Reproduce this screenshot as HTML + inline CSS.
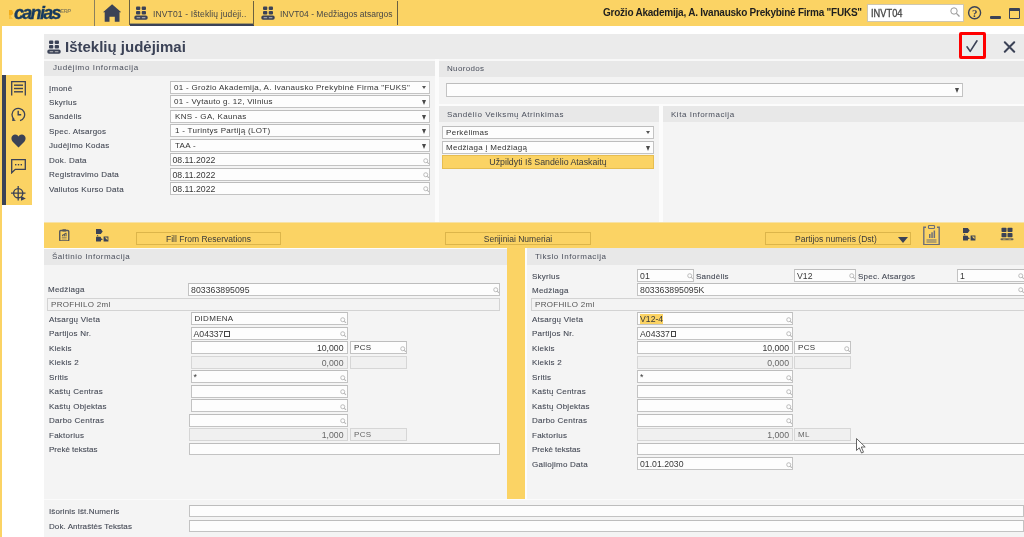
<!DOCTYPE html><html><head><meta charset='utf-8'><style>
*{margin:0;padding:0;-webkit-font-smoothing:antialiased}
body{will-change:transform}
html,body{width:1024px;height:537px;overflow:hidden;background:#fff;position:relative}
body div, body svg{position:absolute}
body div div{position:absolute}
.lbl{font:8px/10px 'Liberation Sans',sans-serif;color:#444955;white-space:nowrap;letter-spacing:0.25px;margin-top:1.5px;-webkit-text-stroke:0.1px #444955}
.sec{font:8px/10px 'Liberation Sans',sans-serif;color:#4a4f5c;white-space:nowrap;letter-spacing:0.53px}
.iv{font:8px/10px 'Liberation Sans',sans-serif;color:#333;white-space:nowrap;letter-spacing:0.3px}
.ivn{font:8.7px/10px 'Liberation Sans',sans-serif;color:#383838;white-space:nowrap;letter-spacing:0.05px}
.tab{font:8.5px/10px 'Liberation Sans',sans-serif;color:#474747;white-space:nowrap;letter-spacing:0.14px;}
.comp{font:bold 10px/12px 'Liberation Sans',sans-serif;color:#1e1e1e;white-space:nowrap;letter-spacing:-0.23px}
.sbx{font:10.5px/12px 'Liberation Sans',sans-serif;color:#444;white-space:nowrap;letter-spacing:0px;transform:scaleX(0.885);transform-origin:0 0;-webkit-text-stroke:0.3px #444}
.title{font:bold 15px/18px 'Liberation Sans',sans-serif;color:#3b4256;white-space:nowrap}
.btn{font:8.5px/10px 'Liberation Sans',sans-serif;color:#3a3a3a;white-space:nowrap}
.ivd{font:8.7px/10px 'Liberation Sans',sans-serif;color:#383838;white-space:nowrap;letter-spacing:0px}
.sq{display:inline-block;width:3.5px;height:4px;border:1px solid #444;margin-left:1px;vertical-align:0px}
.in{box-sizing:border-box;border:1px solid #c3c3c3;border-top-color:#bdbdbd}
.srch{position:absolute;left:0;top:0}
</style></head><body>
<div style="left:0px;top:0px;width:1024px;height:26px;background:#fbd364"></div>
<div style="left:0px;top:0px;width:2px;height:537px;background:#fbd364"></div>
<div style="left:8.5px;top:9.5px;width:4.5px;height:9.5px;background:linear-gradient(#f3ad1a 0,#f3ad1a 50%,#f7c03a 50%);clip-path:polygon(0 0,70% 0,100% 25%,100% 45%,50% 72%,100% 100%,0 100%)"></div>
<div style="left:14px;top:2.5px;font:italic bold 18px/20px 'Liberation Sans',sans-serif;color:#163a5e;letter-spacing:-1.7px;-webkit-text-stroke:0.35px #163a5e">canias</div>
<div style="left:60px;top:7.5px;font:italic bold 5.5px/6px 'Liberation Sans',sans-serif;color:#8f8258;letter-spacing:-0.2px">ERP</div>
<div style="left:93.5px;top:0px;width:1.5px;height:26px;background:#8a7f5e"></div>
<svg style="position:absolute;left:102.5px;top:4px" width="18.5" height="18" viewBox="0 0 18.5 18"><path d="M9.1 0.2 L18.2 8.3 L16.5 8.3 L16.5 17.8 L11.8 17.8 L11.8 12.8 L6.5 12.8 L6.5 17.8 L1.7 17.8 L1.7 8.3 L0 8.3 Z" fill="#3b4256"/></svg>
<div style="left:129px;top:0px;width:1.2px;height:25px;background:#6b6040"></div>
<div style="left:130px;top:24px;width:124px;height:2px;background:#3b4256"></div>
<div style="left:130px;top:23px;width:124px;height:1px;background:#a89860"></div>
<div style="left:253px;top:1px;width:1px;height:24px;background:#6b6040"></div>
<div style="left:397px;top:1px;width:1px;height:24px;background:#6b6040"></div>
<svg style="position:absolute;left:134px;top:6px" width="14.0" height="14.0" viewBox="0 0 14 14"><rect x="2" y="0.5" width="4.3" height="3.6" rx="1" fill="#3b4256"/><rect x="7.7" y="0.5" width="4.3" height="3.6" rx="1" fill="#3b4256"/><rect x="2" y="5" width="4.3" height="3.6" rx="1" fill="#3b4256"/><rect x="7.7" y="5" width="4.3" height="3.6" rx="1" fill="#3b4256"/><rect x="0.3" y="9.6" width="13.4" height="4.2" rx="1.8" fill="#3b4256"/><rect x="2.6" y="11.3" width="3.6" height="0.9" fill="#c8c8c8"/><rect x="7.8" y="11.3" width="3.6" height="0.9" fill="#c8c8c8"/></svg>
<div class="tab" style="left:153px;top:9px;">INVT01 - Išteklių judėji..</div>
<svg style="position:absolute;left:261px;top:6px" width="14.0" height="14.0" viewBox="0 0 14 14"><rect x="2" y="0.5" width="4.3" height="3.6" rx="1" fill="#3b4256"/><rect x="7.7" y="0.5" width="4.3" height="3.6" rx="1" fill="#3b4256"/><rect x="2" y="5" width="4.3" height="3.6" rx="1" fill="#3b4256"/><rect x="7.7" y="5" width="4.3" height="3.6" rx="1" fill="#3b4256"/><rect x="0.3" y="9.6" width="13.4" height="4.2" rx="1.8" fill="#3b4256"/><rect x="2.6" y="11.3" width="3.6" height="0.9" fill="#c8c8c8"/><rect x="7.8" y="11.3" width="3.6" height="0.9" fill="#c8c8c8"/></svg>
<div class="tab" style="left:280px;top:9px;letter-spacing:0px">INVT04 - Medžiagos atsargos</div>
<div class="comp" style="left:603px;top:7px;">Grožio Akademija, A. Ivanausko Prekybinė Firma "FUKS"</div>
<div style="left:867px;top:4px;width:96.5px;height:17.5px;background:#fff;border:1px solid #cfc7b0;box-sizing:border-box"></div>
<div class="sbx" style="left:871px;top:7.2px;">INVT04</div>
<svg style="position:absolute;left:950px;top:7px" width="10" height="10" viewBox="0 0 10 10"><circle cx="4" cy="4" r="3.2" fill="none" stroke="#9a9a9a" stroke-width="1"/><path d="M6.4 6.4 9.5 9.5" stroke="#9a9a9a" stroke-width="1.3"/></svg>
<svg style="position:absolute;left:967px;top:5px" width="15" height="15" viewBox="0 0 15 15"><circle cx="7.6" cy="7.7" r="6" fill="none" stroke="#3b4256" stroke-width="1.4"/><text x="7.7" y="11.6" text-anchor="middle" font-family="Liberation Serif" font-weight="bold" font-size="11" fill="#3b4256">?</text></svg>
<div style="left:989.5px;top:16px;width:11px;height:2.5px;background:#3b4256;border-radius:1px"></div>
<div style="left:1009px;top:8px;width:11px;height:11px;border:1.6px solid #3b4256;border-top-width:3.6px;box-sizing:border-box;border-radius:1px"></div>
<div style="left:44px;top:34px;width:980px;height:503px;background:#f4f4f4"></div>
<div style="left:44px;top:34px;width:980px;height:25px;background:#ebebeb"></div>
<div style="left:44px;top:59px;width:980px;height:1.5px;background:#f8f8f8"></div>
<svg style="position:absolute;left:47px;top:40px" width="14.0" height="14.0" viewBox="0 0 14 14"><rect x="2" y="0.5" width="4.3" height="3.6" rx="1" fill="#3b4256"/><rect x="7.7" y="0.5" width="4.3" height="3.6" rx="1" fill="#3b4256"/><rect x="2" y="5" width="4.3" height="3.6" rx="1" fill="#3b4256"/><rect x="7.7" y="5" width="4.3" height="3.6" rx="1" fill="#3b4256"/><rect x="0.3" y="9.6" width="13.4" height="4.2" rx="1.8" fill="#3b4256"/><rect x="2.6" y="11.3" width="3.6" height="0.9" fill="#c8c8c8"/><rect x="7.8" y="11.3" width="3.6" height="0.9" fill="#c8c8c8"/></svg>
<div class="title" style="left:65px;top:37.7px;">Išteklių judėjimai</div>
<div style="left:959px;top:32px;width:27px;height:27px;border:3px solid #f00;border-radius:2px;box-sizing:border-box;background:#e9ecec"></div>
<svg style="position:absolute;left:965px;top:39px" width="14" height="14" viewBox="0 0 14 14"><path d="M2 7.8 L5.2 12.4 L12 1.8" fill="none" stroke="#3b4256" stroke-width="1.6" stroke-linecap="round" stroke-linejoin="round"/></svg>
<svg style="position:absolute;left:1003px;top:40px" width="13" height="13" viewBox="0 0 13 13"><path d="M1.8 2.3 L11.2 11.7 M11.2 2.3 L1.8 11.7" fill="none" stroke="#3b4256" stroke-width="2" stroke-linecap="round"/></svg>
<div style="left:44px;top:61px;width:391px;height:15px;background:#e8e8e8"></div>
<div class="sec" style="left:53px;top:63px;letter-spacing:0.62px">Judėjimo Informacija</div>
<div style="left:435px;top:59px;width:4px;height:163px;background:#fcfcfc"></div>
<div class="lbl" style="left:49px;top:82.0px;">Įmonė</div>
<div class="in" style="left:170px;top:81.0px;width:260px;height:13px;background:#fdfdfd;"><div class="iv" style="left:3px;top:1px">01 - Grožio Akademija, A. Ivanausko Prekybinė Firma "FUKS"</div><div class="arr" style="right:3.5px;top:4px;border-left:2px solid transparent;border-right:2px solid transparent;border-top:3.5px solid #555"></div></div>
<div class="lbl" style="left:49px;top:96.45px;">Skyrius</div>
<div class="in" style="left:170px;top:95.45px;width:260px;height:13px;background:#fdfdfd;"><div class="iv" style="left:3px;top:1px">01 - Vytauto g. 12, Vilnius</div><div class="arr" style="right:3px;top:4px;border-left:2.5px solid transparent;border-right:2.5px solid transparent;border-top:5px solid #4a4a4a"></div></div>
<div class="lbl" style="left:49px;top:110.9px;">Sandėlis</div>
<div class="in" style="left:170px;top:109.9px;width:260px;height:13px;background:#fdfdfd;"><div class="iv" style="left:3px;top:1px"><span style="margin-left:1px">KNS - GA, Kaunas</span></div><div class="arr" style="right:3px;top:4px;border-left:2.5px solid transparent;border-right:2.5px solid transparent;border-top:5px solid #4a4a4a"></div></div>
<div class="lbl" style="left:49px;top:125.35px;">Spec. Atsargos</div>
<div class="in" style="left:170px;top:124.35px;width:260px;height:13px;background:#fdfdfd;"><div class="iv" style="left:3px;top:1px"><span style="margin-left:1px">1 - Turintys Partiją (LOT)</span></div><div class="arr" style="right:3px;top:4px;border-left:2.5px solid transparent;border-right:2.5px solid transparent;border-top:5px solid #4a4a4a"></div></div>
<div class="lbl" style="left:49px;top:139.8px;">Judėjimo Kodas</div>
<div class="in" style="left:170px;top:138.8px;width:260px;height:13px;background:#fdfdfd;"><div class="iv" style="left:3px;top:1px"><span style="margin-left:1px">TAA -</span></div><div class="arr" style="right:3px;top:4px;border-left:2.5px solid transparent;border-right:2.5px solid transparent;border-top:5px solid #4a4a4a"></div></div>
<div class="lbl" style="left:49px;top:154.25px;">Dok. Data</div>
<div class="in" style="left:169.5px;top:153.25px;width:260.5px;height:13px;background:#fdfdfd;"><div class="ivd" style="left:2px;top:1px">08.11.2022</div><div style="right:0px;top:3.3px;width:6.5px;height:6.5px"><svg class="srch" width="6.5" height="6.5" viewBox="0 0 10 10"><circle cx="4.2" cy="4.2" r="3.1" fill="none" stroke="#bababa" stroke-width="1.5"/><path d="M6.4 6.4 9.2 9.2" stroke="#bababa" stroke-width="1.7"/></svg></div></div>
<div class="lbl" style="left:49px;top:168.7px;">Registravimo Data</div>
<div class="in" style="left:169.5px;top:167.7px;width:260.5px;height:13px;background:#fdfdfd;"><div class="ivd" style="left:2px;top:1px">08.11.2022</div><div style="right:0px;top:3.3px;width:6.5px;height:6.5px"><svg class="srch" width="6.5" height="6.5" viewBox="0 0 10 10"><circle cx="4.2" cy="4.2" r="3.1" fill="none" stroke="#bababa" stroke-width="1.5"/><path d="M6.4 6.4 9.2 9.2" stroke="#bababa" stroke-width="1.7"/></svg></div></div>
<div class="lbl" style="left:49px;top:183.14999999999998px;">Valiutos Kurso Data</div>
<div class="in" style="left:169.5px;top:182.14999999999998px;width:260.5px;height:13px;background:#fdfdfd;"><div class="ivd" style="left:2px;top:1px">08.11.2022</div><div style="right:0px;top:3.3px;width:6.5px;height:6.5px"><svg class="srch" width="6.5" height="6.5" viewBox="0 0 10 10"><circle cx="4.2" cy="4.2" r="3.1" fill="none" stroke="#bababa" stroke-width="1.5"/><path d="M6.4 6.4 9.2 9.2" stroke="#bababa" stroke-width="1.7"/></svg></div></div>
<div style="left:439px;top:61px;width:585px;height:16px;background:#e8e8e8"></div>
<div class="sec" style="left:447px;top:64px;letter-spacing:0.33px">Nuorodos</div>
<div class="in" style="left:446px;top:83px;width:517px;height:14px;background:#fdfdfd;"><div class="arr" style="right:3px;top:4px;border-left:2.5px solid transparent;border-right:2.5px solid transparent;border-top:5px solid #4a4a4a"></div></div>
<div style="left:439px;top:104px;width:585px;height:2px;background:#fcfcfc"></div>
<div style="left:439px;top:106px;width:220px;height:16px;background:#e8e8e8"></div>
<div class="sec" style="left:447px;top:110px;">Sandėlio Veiksmų Atrinkimas</div>
<div style="left:659px;top:106px;width:4px;height:116px;background:#fcfcfc"></div>
<div style="left:663px;top:106px;width:361px;height:16px;background:#e8e8e8"></div>
<div class="sec" style="left:671px;top:110px;">Kita Informacija</div>
<div class="in" style="left:442px;top:126px;width:212px;height:13px;background:#fdfdfd;"><div class="iv" style="left:3px;top:1px">Perkėlimas</div><div class="arr" style="right:3.5px;top:4px;border-left:2px solid transparent;border-right:2px solid transparent;border-top:3.5px solid #555"></div></div>
<div class="in" style="left:442px;top:141px;width:212px;height:12.5px;background:#fdfdfd;"><div class="iv" style="left:3px;top:1px">Medžiaga į Medžiagą</div><div class="arr" style="right:3px;top:4px;border-left:2.5px solid transparent;border-right:2.5px solid transparent;border-top:5px solid #4a4a4a"></div></div>
<div style="left:442px;top:155px;width:212px;height:13.5px;background:#fbd364;border:1px solid #e6bd50;box-sizing:border-box"></div>
<div class="btn" style="left:442px;top:156.5px;width:212px;text-align:center;font-size:8.8px">Užpildyti Iš Sandėlio Ataskaitų</div>
<div style="left:44px;top:222px;width:980px;height:1px;background:#f7e2a6"></div>
<div style="left:44px;top:223px;width:980px;height:25px;background:#fbd364"></div>
<svg style="position:absolute;left:59px;top:228.5px" width="10.5" height="12.6" viewBox="0 0 10 12"><rect x="0.7" y="1.4" width="8.6" height="9.9" rx="0.9" fill="none" stroke="#55565a" stroke-width="1.3"/><rect x="3.2" y="0.2" width="3.6" height="2.2" rx="0.6" fill="#55565a"/><path d="M3 6.3 L6.8 3.8" stroke="#55565a" stroke-width="0.9"/><rect x="3" y="5.4" width="1" height="1.6" fill="#55565a"/><rect x="4.6" y="4.6" width="1" height="2.4" fill="#55565a"/><rect x="6.2" y="3.8" width="1" height="3.2" fill="#55565a"/><rect x="2.7" y="7.9" width="4.6" height="0.7" fill="#55565a" opacity="0.7"/><rect x="2.7" y="9.2" width="4.6" height="0.7" fill="#55565a" opacity="0.7"/></svg>
<svg style="position:absolute;left:96px;top:229px" width="13.0" height="13.0" viewBox="0 0 13 13"><path d="M0 0 H4.8 L6.7 2.5 L4.8 5 H0 Z" fill="#3b4256"/><path d="M1.6 5.8 L2.6 7.2 H0.6 Z" fill="#3b4256"/><rect x="0" y="7.8" width="5" height="4.8" rx="0.6" fill="#3b4256"/><path d="M5 9.2 L7 10.2 L5 11.2 Z" fill="#3b4256"/><path d="M7.6 7.6 H12.4 V12.6 H7.6 Z M8.8 8.4 L11.5 11.3 V8.4 Z" fill="#3b4256" fill-rule="evenodd"/></svg>
<div style="left:136px;top:232px;width:145px;height:13px;border:1px solid #dcb54a;box-sizing:border-box"></div>
<div class="btn" style="left:136px;top:234px;width:145px;text-align:center">Fill From Reservations</div>
<div style="left:445px;top:232px;width:146px;height:13px;border:1px solid #dcb54a;box-sizing:border-box"></div>
<div class="btn" style="left:445px;top:234px;width:146px;text-align:center">Serijiniai Numeriai</div>
<div style="left:765px;top:232px;width:146px;height:13px;border:1px solid #dcb54a;box-sizing:border-box"></div>
<div class="btn" style="left:795px;top:234px;">Partijos numeris (Dst)</div>
<div style="left:898px;top:236.5px;width:0;height:0;border-left:5.5px solid transparent;border-right:5.5px solid transparent;border-top:6px solid #3b4256"></div>
<svg style="position:absolute;left:923px;top:224.5px" width="17" height="20.5" viewBox="0 0 17 20.5"><path d="M3 2.3 H0.8 V19.7 H16.2 V2.3 H14" fill="none" stroke="#6a6e7a" stroke-width="1.4"/><rect x="5.5" y="0.5" width="6" height="3" rx="0.8" fill="none" stroke="#6a6e7a" stroke-width="1.1"/><rect x="6" y="9" width="1.5" height="4" fill="#6a6e7a"/><rect x="8.3" y="7.3" width="1.5" height="5.7" fill="#6a6e7a"/><rect x="10.6" y="5.5" width="1.5" height="7.5" fill="#6a6e7a"/><rect x="3.5" y="14.5" width="10" height="1" fill="#6a6e7a"/><rect x="3.5" y="16.5" width="10" height="1" fill="#6a6e7a"/></svg>
<svg style="position:absolute;left:963px;top:228px" width="13.0" height="13.0" viewBox="0 0 13 13"><path d="M0 0 H4.8 L6.7 2.5 L4.8 5 H0 Z" fill="#3b4256"/><path d="M1.6 5.8 L2.6 7.2 H0.6 Z" fill="#3b4256"/><rect x="0" y="7.8" width="5" height="4.8" rx="0.6" fill="#3b4256"/><path d="M5 9.2 L7 10.2 L5 11.2 Z" fill="#3b4256"/><path d="M7.6 7.6 H12.4 V12.6 H7.6 Z M8.8 8.4 L11.5 11.3 V8.4 Z" fill="#3b4256" fill-rule="evenodd"/></svg>
<svg style="position:absolute;left:1000px;top:227px" width="14" height="14" viewBox="0 0 14 14"><rect x="1.5" y="0.8" width="5" height="4.3" rx="0.8" fill="#3b4256"/><rect x="7.5" y="0.8" width="5" height="4.3" rx="0.8" fill="#3b4256"/><rect x="1.5" y="6" width="5" height="4.3" rx="0.8" fill="#3b4256"/><rect x="7.5" y="6" width="5" height="4.3" rx="0.8" fill="#3b4256"/><rect x="0.5" y="11.2" width="13" height="2" rx="1" fill="#3b4256" opacity="0.75"/><rect x="3" y="11.8" width="2.5" height="0.8" fill="#f9d262" opacity="0.6"/><rect x="8.5" y="11.8" width="2.5" height="0.8" fill="#f9d262" opacity="0.6"/></svg>
<div style="left:44px;top:248px;width:463px;height:17px;background:#e8e8e8"></div>
<div style="left:44px;top:247.5px;width:980px;height:1px;background:#fcfcfc"></div>
<div style="left:507px;top:247px;width:18px;height:253px;background:#fbd364"></div>
<div class="sec" style="left:52px;top:252px;">Šaltinio Informacija</div>
<div style="left:507px;top:247px;width:18px;height:253px;background:#fbd364"></div>
<div style="left:525px;top:248px;width:2px;height:252px;background:#fcfcfc"></div>
<div style="left:527px;top:248px;width:497px;height:17px;background:#e8e8e8"></div>
<div class="sec" style="left:535px;top:252px;">Tikslo Informacija</div>
<div style="left:44px;top:499px;width:980px;height:1px;background:#fbfbfb"></div>
<div class="lbl" style="left:48px;top:283.5px;">Medžiaga</div>
<div class="in" style="left:188px;top:283px;width:312px;height:13px;background:#fdfdfd;"><div class="ivn" style="left:2px;top:1px">803363895095</div><div style="right:0px;top:3.3px;width:6.5px;height:6.5px"><svg class="srch" width="6.5" height="6.5" viewBox="0 0 10 10"><circle cx="4.2" cy="4.2" r="3.1" fill="none" stroke="#bababa" stroke-width="1.5"/><path d="M6.4 6.4 9.2 9.2" stroke="#bababa" stroke-width="1.7"/></svg></div></div>
<div class="in" style="left:47px;top:297.5px;width:453px;height:13px;background:#f3f3f3;border-color:#d3d3d3"><div class="iv" style="left:3px;top:1px;color:#555">PROFHILO 2ml</div></div>
<div class="lbl" style="left:49px;top:313.3px;">Atsargų Vieta</div>
<div class="in" style="left:190.5px;top:312.3px;width:157px;height:13px;background:#fdfdfd;"><div class="iv" style="left:3px;top:1px">DIDMENA</div><div style="right:0px;top:3.3px;width:6.5px;height:6.5px"><svg class="srch" width="6.5" height="6.5" viewBox="0 0 10 10"><circle cx="4.2" cy="4.2" r="3.1" fill="none" stroke="#bababa" stroke-width="1.5"/><path d="M6.4 6.4 9.2 9.2" stroke="#bababa" stroke-width="1.7"/></svg></div></div>
<div class="lbl" style="left:49px;top:327.8px;">Partijos Nr.</div>
<div class="in" style="left:190.5px;top:326.8px;width:157px;height:13px;background:#fdfdfd;"><div class="ivd" style="left:2px;top:1px">A04337<span class='sq'></span></div><div style="right:0px;top:3.3px;width:6.5px;height:6.5px"><svg class="srch" width="6.5" height="6.5" viewBox="0 0 10 10"><circle cx="4.2" cy="4.2" r="3.1" fill="none" stroke="#bababa" stroke-width="1.5"/><path d="M6.4 6.4 9.2 9.2" stroke="#bababa" stroke-width="1.7"/></svg></div></div>
<div class="lbl" style="left:49px;top:342.3px;">Kiekis</div>
<div class="in" style="left:190.5px;top:341.3px;width:157px;height:13px;background:#fdfdfd;"><div class="ivd" style="right:3px;top:1px;text-align:right">10,000</div></div>
<div class="in" style="left:350px;top:341.3px;width:57px;height:13px;background:#fdfdfd;"><div class="iv" style="left:3px;top:1px">PCS</div><div style="right:0px;top:3.3px;width:6.5px;height:6.5px"><svg class="srch" width="6.5" height="6.5" viewBox="0 0 10 10"><circle cx="4.2" cy="4.2" r="3.1" fill="none" stroke="#bababa" stroke-width="1.5"/><path d="M6.4 6.4 9.2 9.2" stroke="#bababa" stroke-width="1.7"/></svg></div></div>
<div class="lbl" style="left:49px;top:356.8px;">Kiekis 2</div>
<div class="in" style="left:190.5px;top:355.8px;width:157px;height:13px;background:#f0f0f0;border-color:#d6d6d6;"><div class="ivd" style="right:3px;top:1px;text-align:right"><span style="color:#666">0,000</span></div></div>
<div class="in" style="left:350px;top:355.8px;width:57px;height:13px;background:#f0f0f0;border-color:#d6d6d6;"></div>
<div class="lbl" style="left:49px;top:371.3px;">Sritis</div>
<div class="in" style="left:190.5px;top:370.3px;width:157px;height:13px;background:#fdfdfd;"><div class="ivn" style="left:2px;top:1px">*</div><div style="right:0px;top:3.3px;width:6.5px;height:6.5px"><svg class="srch" width="6.5" height="6.5" viewBox="0 0 10 10"><circle cx="4.2" cy="4.2" r="3.1" fill="none" stroke="#bababa" stroke-width="1.5"/><path d="M6.4 6.4 9.2 9.2" stroke="#bababa" stroke-width="1.7"/></svg></div></div>
<div class="lbl" style="left:49px;top:385.8px;">Kaštų Centras</div>
<div class="in" style="left:190.5px;top:384.8px;width:157px;height:13px;background:#fdfdfd;"><div style="right:0px;top:3.3px;width:6.5px;height:6.5px"><svg class="srch" width="6.5" height="6.5" viewBox="0 0 10 10"><circle cx="4.2" cy="4.2" r="3.1" fill="none" stroke="#bababa" stroke-width="1.5"/><path d="M6.4 6.4 9.2 9.2" stroke="#bababa" stroke-width="1.7"/></svg></div></div>
<div class="lbl" style="left:49px;top:400.3px;">Kaštų Objektas</div>
<div class="in" style="left:190.5px;top:399.3px;width:157px;height:13px;background:#fdfdfd;"><div style="right:0px;top:3.3px;width:6.5px;height:6.5px"><svg class="srch" width="6.5" height="6.5" viewBox="0 0 10 10"><circle cx="4.2" cy="4.2" r="3.1" fill="none" stroke="#bababa" stroke-width="1.5"/><path d="M6.4 6.4 9.2 9.2" stroke="#bababa" stroke-width="1.7"/></svg></div></div>
<div class="lbl" style="left:49px;top:414.8px;">Darbo Centras</div>
<div class="in" style="left:189px;top:413.8px;width:158.5px;height:13px;background:#fdfdfd;"><div style="right:0px;top:3.3px;width:6.5px;height:6.5px"><svg class="srch" width="6.5" height="6.5" viewBox="0 0 10 10"><circle cx="4.2" cy="4.2" r="3.1" fill="none" stroke="#bababa" stroke-width="1.5"/><path d="M6.4 6.4 9.2 9.2" stroke="#bababa" stroke-width="1.7"/></svg></div></div>
<div class="lbl" style="left:49px;top:429.3px;">Faktorius</div>
<div class="in" style="left:189px;top:428.3px;width:158.5px;height:13px;background:#f0f0f0;border-color:#d6d6d6;"><div class="ivd" style="right:3px;top:1px;text-align:right"><span style="color:#666">1,000</span></div></div>
<div class="in" style="left:350px;top:428.3px;width:57px;height:13px;background:#f0f0f0;border-color:#d6d6d6;"><div class="iv" style="left:3px;top:1px"><span style="color:#666">PCS</span></div></div>
<div class="lbl" style="left:49px;top:443.8px;letter-spacing:0px">Prekė tekstas</div>
<div class="in" style="left:189px;top:442.8px;width:311px;height:12px;background:#fdfdfd;"></div>
<div class="lbl" style="left:532px;top:270px;">Skyrius</div>
<div class="in" style="left:637px;top:269px;width:57px;height:13px;background:#fdfdfd;"><div class="ivn" style="left:2px;top:1px">01</div><div style="right:0px;top:3.3px;width:6.5px;height:6.5px"><svg class="srch" width="6.5" height="6.5" viewBox="0 0 10 10"><circle cx="4.2" cy="4.2" r="3.1" fill="none" stroke="#bababa" stroke-width="1.5"/><path d="M6.4 6.4 9.2 9.2" stroke="#bababa" stroke-width="1.7"/></svg></div></div>
<div class="lbl" style="left:696px;top:270px;">Sandėlis</div>
<div class="in" style="left:794px;top:269px;width:62px;height:13px;background:#fdfdfd;"><div class="ivn" style="left:2px;top:1px">V12</div><div style="right:0px;top:3.3px;width:6.5px;height:6.5px"><svg class="srch" width="6.5" height="6.5" viewBox="0 0 10 10"><circle cx="4.2" cy="4.2" r="3.1" fill="none" stroke="#bababa" stroke-width="1.5"/><path d="M6.4 6.4 9.2 9.2" stroke="#bababa" stroke-width="1.7"/></svg></div></div>
<div class="lbl" style="left:858px;top:270px;">Spec. Atsargos</div>
<div class="in" style="left:957px;top:269px;width:68px;height:13px;background:#fdfdfd;"><div class="ivn" style="left:2px;top:1px">1</div><div style="right:0px;top:3.3px;width:6.5px;height:6.5px"><svg class="srch" width="6.5" height="6.5" viewBox="0 0 10 10"><circle cx="4.2" cy="4.2" r="3.1" fill="none" stroke="#bababa" stroke-width="1.5"/><path d="M6.4 6.4 9.2 9.2" stroke="#bababa" stroke-width="1.7"/></svg></div></div>
<div class="lbl" style="left:532px;top:284px;">Medžiaga</div>
<div class="in" style="left:637px;top:283px;width:388px;height:13px;background:#fdfdfd;"><div class="ivn" style="left:2px;top:1px">803363895095K</div><div style="right:0px;top:3.3px;width:6.5px;height:6.5px"><svg class="srch" width="6.5" height="6.5" viewBox="0 0 10 10"><circle cx="4.2" cy="4.2" r="3.1" fill="none" stroke="#bababa" stroke-width="1.5"/><path d="M6.4 6.4 9.2 9.2" stroke="#bababa" stroke-width="1.7"/></svg></div></div>
<div class="in" style="left:531px;top:297.5px;width:500px;height:13px;background:#f3f3f3;border-color:#d3d3d3"><div class="iv" style="left:3px;top:1px;color:#555">PROFHILO 2ml</div></div>
<div class="lbl" style="left:532px;top:313.3px;">Atsargų Vieta</div>
<div class="in" style="left:637px;top:312.3px;width:156px;height:13px;background:#fdfdfd;"><div class="ivd" style="left:2px;top:1px"><span style="background:#fbd364">V12-4</span></div><div style="right:0px;top:3.3px;width:6.5px;height:6.5px"><svg class="srch" width="6.5" height="6.5" viewBox="0 0 10 10"><circle cx="4.2" cy="4.2" r="3.1" fill="none" stroke="#bababa" stroke-width="1.5"/><path d="M6.4 6.4 9.2 9.2" stroke="#bababa" stroke-width="1.7"/></svg></div></div>
<div class="lbl" style="left:532px;top:327.8px;">Partijos Nr.</div>
<div class="in" style="left:637px;top:326.8px;width:156px;height:13px;background:#fdfdfd;"><div class="ivd" style="left:2px;top:1px">A04337<span class='sq'></span></div><div style="right:0px;top:3.3px;width:6.5px;height:6.5px"><svg class="srch" width="6.5" height="6.5" viewBox="0 0 10 10"><circle cx="4.2" cy="4.2" r="3.1" fill="none" stroke="#bababa" stroke-width="1.5"/><path d="M6.4 6.4 9.2 9.2" stroke="#bababa" stroke-width="1.7"/></svg></div></div>
<div class="lbl" style="left:532px;top:342.3px;">Kiekis</div>
<div class="in" style="left:637px;top:341.3px;width:156px;height:13px;background:#fdfdfd;"><div class="ivd" style="right:3px;top:1px;text-align:right">10,000</div></div>
<div class="in" style="left:794px;top:341.3px;width:57px;height:13px;background:#fdfdfd;"><div class="iv" style="left:3px;top:1px">PCS</div><div style="right:0px;top:3.3px;width:6.5px;height:6.5px"><svg class="srch" width="6.5" height="6.5" viewBox="0 0 10 10"><circle cx="4.2" cy="4.2" r="3.1" fill="none" stroke="#bababa" stroke-width="1.5"/><path d="M6.4 6.4 9.2 9.2" stroke="#bababa" stroke-width="1.7"/></svg></div></div>
<div class="lbl" style="left:532px;top:356.8px;">Kiekis 2</div>
<div class="in" style="left:637px;top:355.8px;width:156px;height:13px;background:#f0f0f0;border-color:#d6d6d6;"><div class="ivd" style="right:3px;top:1px;text-align:right"><span style="color:#666">0,000</span></div></div>
<div class="in" style="left:794px;top:355.8px;width:57px;height:13px;background:#f0f0f0;border-color:#d6d6d6;"></div>
<div class="lbl" style="left:532px;top:371.3px;">Sritis</div>
<div class="in" style="left:637px;top:370.3px;width:156px;height:13px;background:#fdfdfd;"><div class="ivn" style="left:2px;top:1px">*</div><div style="right:0px;top:3.3px;width:6.5px;height:6.5px"><svg class="srch" width="6.5" height="6.5" viewBox="0 0 10 10"><circle cx="4.2" cy="4.2" r="3.1" fill="none" stroke="#bababa" stroke-width="1.5"/><path d="M6.4 6.4 9.2 9.2" stroke="#bababa" stroke-width="1.7"/></svg></div></div>
<div class="lbl" style="left:532px;top:385.8px;">Kaštų Centras</div>
<div class="in" style="left:637px;top:384.8px;width:156px;height:13px;background:#fdfdfd;"><div style="right:0px;top:3.3px;width:6.5px;height:6.5px"><svg class="srch" width="6.5" height="6.5" viewBox="0 0 10 10"><circle cx="4.2" cy="4.2" r="3.1" fill="none" stroke="#bababa" stroke-width="1.5"/><path d="M6.4 6.4 9.2 9.2" stroke="#bababa" stroke-width="1.7"/></svg></div></div>
<div class="lbl" style="left:532px;top:400.3px;">Kaštų Objektas</div>
<div class="in" style="left:637px;top:399.3px;width:156px;height:13px;background:#fdfdfd;"><div style="right:0px;top:3.3px;width:6.5px;height:6.5px"><svg class="srch" width="6.5" height="6.5" viewBox="0 0 10 10"><circle cx="4.2" cy="4.2" r="3.1" fill="none" stroke="#bababa" stroke-width="1.5"/><path d="M6.4 6.4 9.2 9.2" stroke="#bababa" stroke-width="1.7"/></svg></div></div>
<div class="lbl" style="left:532px;top:414.8px;">Darbo Centras</div>
<div class="in" style="left:637px;top:413.8px;width:156px;height:13px;background:#fdfdfd;"><div style="right:0px;top:3.3px;width:6.5px;height:6.5px"><svg class="srch" width="6.5" height="6.5" viewBox="0 0 10 10"><circle cx="4.2" cy="4.2" r="3.1" fill="none" stroke="#bababa" stroke-width="1.5"/><path d="M6.4 6.4 9.2 9.2" stroke="#bababa" stroke-width="1.7"/></svg></div></div>
<div class="lbl" style="left:532px;top:429.3px;">Faktorius</div>
<div class="in" style="left:637px;top:428.3px;width:156px;height:13px;background:#f0f0f0;border-color:#d6d6d6;"><div class="ivd" style="right:3px;top:1px;text-align:right"><span style="color:#666">1,000</span></div></div>
<div class="in" style="left:794px;top:428.3px;width:57px;height:13px;background:#f0f0f0;border-color:#d6d6d6;"><div class="iv" style="left:3px;top:1px"><span style="color:#666">ML</span></div></div>
<div class="lbl" style="left:532px;top:443.8px;letter-spacing:0px">Prekė tekstas</div>
<div class="in" style="left:637px;top:442.8px;width:400px;height:12px;background:#fdfdfd;"></div>
<div class="lbl" style="left:532px;top:458.3px;">Galiojimo Data</div>
<div class="in" style="left:637px;top:457.3px;width:156px;height:13px;background:#fdfdfd;"><div class="ivd" style="left:2px;top:1px">01.01.2030</div><div style="right:0px;top:3.3px;width:6.5px;height:6.5px"><svg class="srch" width="6.5" height="6.5" viewBox="0 0 10 10"><circle cx="4.2" cy="4.2" r="3.1" fill="none" stroke="#bababa" stroke-width="1.5"/><path d="M6.4 6.4 9.2 9.2" stroke="#bababa" stroke-width="1.7"/></svg></div></div>
<div class="lbl" style="left:49px;top:505.5px;letter-spacing:0.12px">Išorinis Išt.Numeris</div>
<div class="in" style="left:189px;top:505px;width:835px;height:12px;background:#fdfdfd;"></div>
<div class="lbl" style="left:49px;top:520px;letter-spacing:0.08px">Dok. Antraštės Tekstas</div>
<div class="in" style="left:189px;top:519.7px;width:835px;height:12px;background:#fdfdfd;"></div>
<div style="left:0px;top:75px;width:32px;height:130px;background:#fbd364"></div>
<div style="left:0px;top:75px;width:2px;height:130px;background:#fbd364"></div>
<div style="left:2px;top:75px;width:3.5px;height:130px;background:#3b4256"></div>
<svg style="position:absolute;left:11px;top:81px" width="15" height="15" viewBox="0 0 15 15"><path d="M0.7 14.5 V0.7 H14.3 V14.5" fill="none" stroke="#3b4256" stroke-width="1.3"/><rect x="3" y="3.5" width="9" height="1.4" fill="#3b4256"/><rect x="3" y="6.8" width="9" height="1.4" fill="#3b4256"/><rect x="3" y="10.1" width="9" height="1.4" fill="#3b4256"/></svg>
<svg style="position:absolute;left:11px;top:106.5px" width="15" height="15" viewBox="0 0 15 15"><path d="M3 12.2 A6.3 6.3 0 1 1 9 13.7" fill="none" stroke="#3b4256" stroke-width="1.3"/><path d="M1.5 10.5 L4.8 13.8 L1.2 14 Z" fill="#3b4256"/><path d="M7.2 3.7 V7.8 H10.2" fill="none" stroke="#3b4256" stroke-width="1.4"/></svg>
<svg style="position:absolute;left:11px;top:133.5px" width="15" height="14" viewBox="0 0 15 14"><path d="M7.5 13.5 L1.5 7.5 C-0.5 5.3 0.3 1 3.8 0.6 C5.5 0.4 6.8 1.4 7.5 2.6 C8.2 1.4 9.5 0.4 11.2 0.6 C14.7 1 15.5 5.3 13.5 7.5 Z" fill="#3b4256"/></svg>
<svg style="position:absolute;left:11px;top:158.5px" width="15" height="15" viewBox="0 0 15 15"><path d="M0.7 0.7 H14.3 V10.3 H4.3 L0.7 13.8 Z" fill="none" stroke="#3b4256" stroke-width="1.3" stroke-linejoin="miter"/><rect x="4" y="5" width="1.4" height="1.4" fill="#3b4256"/><rect x="6.8" y="5" width="1.4" height="1.4" fill="#3b4256"/><rect x="9.6" y="5" width="1.4" height="1.4" fill="#3b4256"/></svg>
<svg style="position:absolute;left:11px;top:186px" width="15" height="15" viewBox="0 0 15 15"><circle cx="7.2" cy="7.2" r="4.6" fill="none" stroke="#3b4256" stroke-width="1.4"/><path d="M7.2 0 V14.5 M0 7.2 H14.5" stroke="#3b4256" stroke-width="1.3"/><path d="M10 10 L14.8 12.4 L10 14.8 Z" fill="#3b4256"/></svg>
<svg style="position:absolute;left:856px;top:437.5px" width="12" height="17" viewBox="0 0 12 17"><path d="M0.5 0.5 L0.5 12.5 L3.3 9.8 L5.5 15 L7.5 14.2 L5.3 9 L9.2 9 Z" fill="#fff" stroke="#555" stroke-width="0.9"/></svg>
</body></html>
